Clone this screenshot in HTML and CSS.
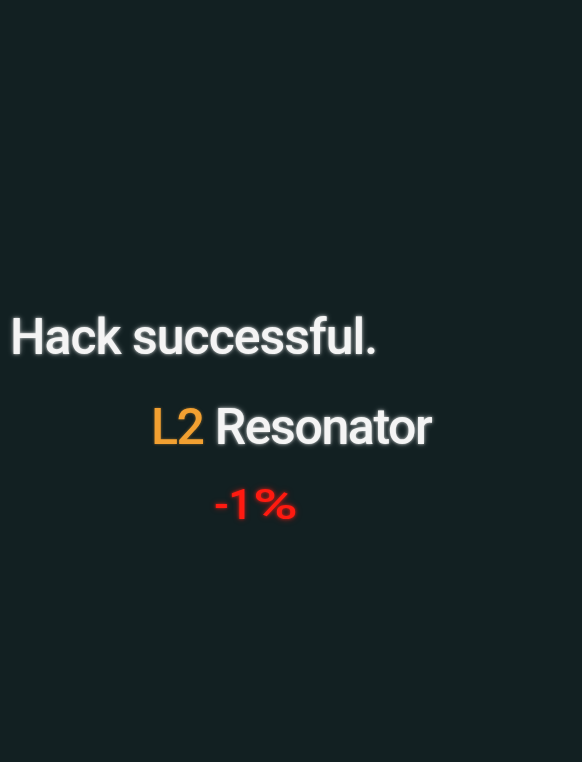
FILE: index.html
```html
<!DOCTYPE html>
<html>
<head>
<meta charset="utf-8">
<link rel="stylesheet" href="styles.css">
</head>
<body>
<main class="screen">
  <p class="line status">Hack successful.</p>
  <p class="line item"><span class="level">L2</span> Resonator</p>
  <p class="line change">-1<span class="pct">%</span></p>
</main>
</body>
</html>
```
FILE: styles.css
```css
html, body {
  margin: 0;
  padding: 0;
  background: #122022;
}
.screen {
  width: 582px;
  height: 762px;
  box-sizing: border-box;
  padding-top: 312px;
  font-family: Roboto, "Liberation Sans", Arial, sans-serif;
  font-weight: 500;
  color: #f4f4f4;
}
.line {
  margin: 0;
  line-height: 1;
}
.status {
  font-size: 50px;
  margin-left: 10px;
  letter-spacing: -1px;
  text-shadow: 0 0 3px rgba(255,255,255,0.7), 0 0 6px rgba(255,255,255,0.35);
}
.item {
  font-size: 50px;
  margin-top: 40px;
  margin-left: 151px;
  letter-spacing: -1.4px;
  text-shadow: 0 0 3px rgba(255,255,255,0.7), 0 0 6px rgba(255,255,255,0.35);
}
.level {
  color: #f2a031;
  text-shadow: 0 0 3px rgba(242,160,49,0.5);
}
.change {
  font-size: 42px;
  margin-top: 32px;
  margin-left: 214px;
  letter-spacing: 0;
  color: #ff1a10;
  text-shadow: 0 0 3px rgba(255,30,20,0.7), 0 0 6px rgba(255,30,20,0.4);
}
.pct {
  display: inline-block;
  margin-left: 1px;
  transform: scaleX(1.45);
  transform-origin: left center;
}
```
